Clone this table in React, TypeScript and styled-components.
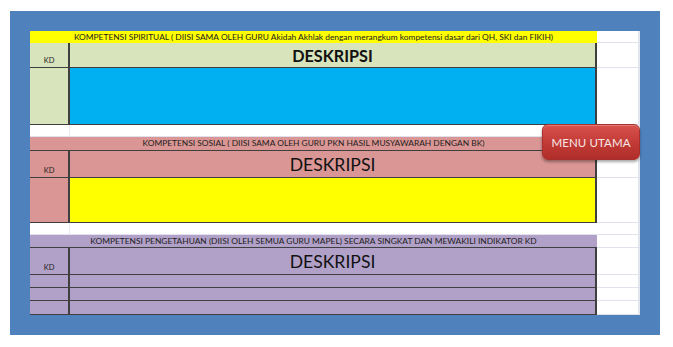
import * as React from "react";
import styled, { createGlobalStyle } from "styled-components";

const GlobalStyle = createGlobalStyle`
  html, body {
    margin: 0;
    padding: 0;
    background: #ffffff;
  }
  body {
    font-family: Lato, "Open Sans", "Liberation Sans", sans-serif;
  }
`;

const GRID = "40px 527px 43px";
const DARK = "#3f3f3f";
const LIGHT = "#dfe2ec";

interface SectionDef {
  title: string;
  tone: string;
  titleTone?: string;
  titleLine?: boolean;
  heading: { weight: number; size: number };
  rows: number[];
  fill?: string;
  heights: [number, number];
}

const sections: SectionDef[] = [
  {
    title:
      "KOMPETENSI SPIRITUAL ( DIISI SAMA OLEH GURU Akidah Akhlak dengan merangkum kompetensi dasar dari QH, SKI dan FIKIH)",
    tone: "#d8e4bc",
    titleTone: "#ffff00",
    heading: { weight: 700, size: 16.2 },
    rows: [57],
    fill: "#00b0f0",
    heights: [12, 25],
  },
  {
    title: "KOMPETENSI SOSIAL ( DIISI SAMA OLEH GURU PKN HASIL MUSYAWARAH DENGAN BK)",
    tone: "#da9694",
    titleLine: true,
    heading: { weight: 400, size: 17.6 },
    rows: [45],
    fill: "#ffff00",
    heights: [14, 27],
  },
  {
    title:
      "KOMPETENSI PENGETAHUAN (DIISI OLEH SEMUA GURU MAPEL) SECARA SINGKAT DAN MEWAKILI INDIKATOR KD",
    tone: "#b1a0c7",
    titleLine: true,
    heading: { weight: 400, size: 17.6 },
    rows: [13, 13, 14],
    heights: [13, 27],
  },
];

const App: React.FC = () => {
  return (
    <>
      <GlobalStyle />
      <Frame>
        <Sheet>
          {sections.map((s, i) => (
            <React.Fragment key={i}>
              {i > 0 && (
                <Spacer>
                  <GapCell $line />
                  <GapCell />
                  <SideCell />
                </Spacer>
              )}
              <Section $rows={[...s.heights, ...s.rows]}>
                <TitleCell $bg={s.titleTone ?? s.tone} $line={!!s.titleLine}>
                  {s.title}
                </TitleCell>
                <SideCell />
                <KdCell $bg={s.tone}>KD</KdCell>
                <HeadCell $bg={s.tone} $weight={s.heading.weight} $size={s.heading.size}>
                  DESKRIPSI
                </HeadCell>
                <SideCell />
                {s.rows.map((_, r) => (
                  <React.Fragment key={r}>
                    <KdCell $bg={s.tone} />
                    <BodyCell $bg={s.fill ?? s.tone} />
                    <SideCell />
                  </React.Fragment>
                ))}
              </Section>
            </React.Fragment>
          ))}
          <MenuButton>MENU UTAMA</MenuButton>
        </Sheet>
      </Frame>
    </>
  );
};

export default App;

const Frame = styled.div`
  margin: 11px 0 0 10px;
  width: 650px;
  height: 324px;
  box-sizing: border-box;
  padding: 20px;
  background: #4f81bd;
`;

const Sheet = styled.div`
  position: relative;
  height: 284px;
  background: #ffffff;
`;

const Section = styled.div<{ $rows: number[] }>`
  display: grid;
  grid-template-columns: ${GRID};
  grid-template-rows: ${(p) => p.$rows.map((h) => `${h}px`).join(" ")};
`;

const Spacer = styled.div`
  display: grid;
  grid-template-columns: ${GRID};
  height: 12px;
`;

const GapCell = styled.div<{ $line?: boolean }>`
  box-sizing: border-box;
  border-right: 1px solid ${(p) => (p.$line ? "#e8ebf2" : "transparent")};
  border-bottom: 1px solid ${LIGHT};
`;

const SideCell = styled.div`
  box-sizing: border-box;
  background: #ffffff;
  border-bottom: 1px solid ${LIGHT};
  border-right: 2px solid #e3e5ee;
`;

const TitleCell = styled.div<{ $bg: string; $line: boolean }>`
  grid-column: span 2;
  box-sizing: border-box;
  background: ${(p) => p.$bg};
  border-bottom: 1px solid ${(p) => (p.$line ? DARK : "transparent")};
  color: #1c1c1c;
  font-size: 8.4px;
  line-height: 12px;
  text-align: center;
  white-space: nowrap;
  overflow: hidden;
`;

const KdCell = styled.div<{ $bg: string }>`
  box-sizing: border-box;
  background: ${(p) => p.$bg};
  border-right: 2px solid ${DARK};
  border-bottom: 1px solid ${DARK};
  display: flex;
  align-items: flex-end;
  justify-content: center;
  padding-bottom: 2px;
  color: #222;
  font-size: 7.5px;
  line-height: 8px;
`;

const HeadCell = styled.div<{ $bg: string; $weight: number; $size: number }>`
  box-sizing: border-box;
  background: ${(p) => p.$bg};
  border-right: 2px solid ${DARK};
  border-bottom: 1px solid ${DARK};
  display: flex;
  align-items: center;
  justify-content: center;
  color: #111;
  font-weight: ${(p) => p.$weight};
  font-size: ${(p) => p.$size}px;
`;

const BodyCell = styled.div<{ $bg: string }>`
  box-sizing: border-box;
  background: ${(p) => p.$bg};
  border-right: 2px solid ${DARK};
  border-bottom: 1px solid ${DARK};
`;

const MenuButton = styled.div`
  position: absolute;
  left: 512px;
  top: 93px;
  width: 98px;
  height: 36px;
  box-sizing: border-box;
  border-radius: 6px;
  background: linear-gradient(#d9514c, #c13a35 55%, #b02e2a);
  border: 1px solid #a8302c;
  box-shadow: 0 2px 3px rgba(0, 0, 0, 0.35), inset 0 1px 0 rgba(255, 255, 255, 0.25);
  display: flex;
  align-items: center;
  justify-content: center;
  color: #f7e8e8;
  font-size: 11.5px;
  letter-spacing: 0.1px;
`;
